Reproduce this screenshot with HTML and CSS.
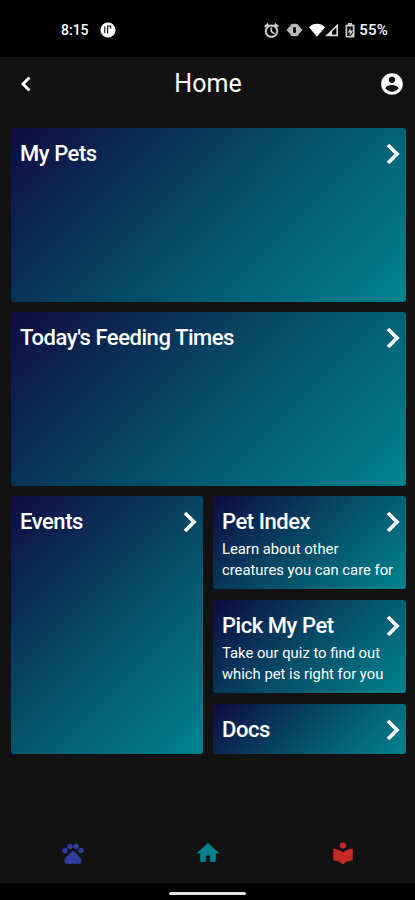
FILE: index.html
```html
<!DOCTYPE html>
<html lang="en">
<head>
    <meta charset="UTF-8">
    <meta name="viewport" content="width=device-width, initial-scale=1.0">
    <title>Home</title>
    <link rel="stylesheet" href="styles.css">
</head>
<body>
    <svg class="defs" width="0" height="0">
        <symbol id="chevron" viewBox="0 0 14 22">
            <path d="M2 2l9 9-9 9" fill="none" stroke="#fff" stroke-width="3.7"/>
        </symbol>
    </svg>

    <div class="statusbar">
        <div class="status-left">
            <span class="time">8:15</span>
            <svg class="app-icon" viewBox="0 0 16 16">
                <circle cx="8" cy="8" r="7.6" fill="#fff"/>
                <path d="M4.800 4.500V11M7.600 11.500V4.200h3v2.600" fill="none" stroke="#222" stroke-width="1.300"/>
            </svg>
        </div>
        <div class="status-right">
            <svg class="alarm" viewBox="0 0 24 24" width="17" height="17">
                <path fill="#ddd" stroke="#ddd" stroke-width=".7" d="M22 5.72l-4.6-3.86-1.29 1.53 4.6 3.86L22 5.72zM7.88 3.39L6.6 1.86 2 5.71l1.29 1.53 4.59-3.85zM12.5 8H11v6l4.75 2.85.75-1.23-4-2.37V8zM12 4c-4.97 0-9 4.03-9 9s4.02 9 9 9c4.97 0 9-4.03 9-9s-4.03-9-9-9zm0 16c-3.87 0-7-3.13-7-7s3.13-7 7-7 7 3.13 7 7-3.13 7-7 7z"/>
            </svg>
            <svg class="vibrate" viewBox="0 0 17 14" width="17" height="14">
                <path fill="#bbb" d="M0.500 7L4 3v8zM16.500 7L13 3v8z"/>
                <rect x="5" y="1.800" width="7" height="10.400" rx="2.500" fill="#bbb" stroke="#bbb" stroke-width="2"/>
                <rect x="7" y="4" width="3" height="6" rx="1" fill="#111"/>
            </svg>
            <svg class="wifi" viewBox="0 0 16 14" width="16" height="14">
                <path fill="#fff" d="M0 4.200C4.600-.4 11.400-.4 16 4.200L8 13.800z"/>
            </svg>
            <svg class="signal" viewBox="0 0 14 14" width="14" height="14">
                <path fill="none" stroke="#ddd" stroke-width="1.600" d="M12.200 2.400v10H2.200z"/>
                <path fill="#ddd" d="M1 13l6-6v6z"/>
            </svg>
            <svg class="battery" viewBox="0 0 10 15" width="10" height="15">
                <path fill="#ccc" d="M3 0h4v1.500h1.500Q9.500 1.500 9.500 2.500v11q0 1-1 1h-7q-1 0-1-1v-11q0-1 1-1H3z"/>
                <path fill="#111" d="M2.200 3.500h5.600v4H5.500V5L2.800 9.500h2v3.500L7.800 8v-.5h.1v2.600L5.800 13H2.200z"/>
            </svg>
            <span class="percent">55%</span>
        </div>
    </div>

    <header class="header">
        <svg class="back" viewBox="0 0 12 18">
            <path d="M9.500 2.500L3 9l6.500 6.500" fill="none" stroke="#fff" stroke-width="2.900"/>
        </svg>
        <h1>Home</h1>
        <svg class="account" viewBox="0 0 24 24">
            <path fill="#fff" d="M12 2C6.480 2 2 6.480 2 12s4.480 10 10 10 10-4.480 10-10S17.520 2 12 2zm0 3c1.660 0 3 1.340 3 3s-1.340 3-3 3-3-1.340-3-3 1.340-3 3-3zm0 14.200c-2.500 0-4.710-1.280-6-3.220.03-1.990 4-3.080 6-3.080 1.990 0 5.970 1.090 6 3.080-1.290 1.940-3.500 3.220-6 3.220z"/>
        </svg>
    </header>

    <main class="grid">
        <section class="card wide">
            <h2>My Pets</h2>
            <svg class="chevron"><use href="#chevron"/></svg>
        </section>
        <section class="card wide">
            <h2>Today's Feeding Times</h2>
            <svg class="chevron"><use href="#chevron"/></svg>
        </section>
        <section class="card events">
            <h2>Events</h2>
            <svg class="chevron"><use href="#chevron"/></svg>
        </section>
        <div class="column">
            <section class="card info">
                <h2>Pet Index</h2>
                <svg class="chevron"><use href="#chevron"/></svg>
                <p>Learn about other<br>creatures you can care for</p>
            </section>
            <section class="card info">
                <h2>Pick My Pet</h2>
                <svg class="chevron"><use href="#chevron"/></svg>
                <p>Take our quiz to find out<br>which pet is right for you</p>
            </section>
            <section class="card docs">
                <h2>Docs</h2>
                <svg class="chevron"><use href="#chevron"/></svg>
            </section>
        </div>
    </main>

    <nav class="tabs">
        <svg viewBox="0 0 26 26">
            <g fill="#303f9f">
                <circle cx="5" cy="10.500" r="2.700"/>
                <circle cx="10" cy="6.500" r="2.700"/>
                <circle cx="16" cy="6.500" r="2.700"/>
                <circle cx="21" cy="10.500" r="2.700"/>
                <path d="M13 11q1 0 2.200 1.300l5.400 5.700c1.900 2.400.8 5.800-1.600 5.800H7c-2.400 0-3.500-3.400-1.600-5.800l5.400-5.700Q12 11 13 11z"/>
            </g>
        </svg>
        <svg viewBox="0 0 24 24">
            <path fill="#00838f" stroke="#00838f" stroke-width=".5" stroke-linejoin="round" d="M10 20v-6h4v6h5v-8h3L12 3 2 12h3v8z"/>
        </svg>
        <svg viewBox="0 0 24 24">
            <path fill="#c62828" d="M12 11.550C9.640 9.350 6.480 8 3 8v11c3.480 0 6.640 1.350 9 3.550 2.360-2.190 5.520-3.550 9-3.550V8c-3.480 0-6.640 1.350-9 3.550zM12 8c1.660 0 3-1.340 3-3s-1.340-3-3-3-3 1.340-3 3 1.340 3 3 3z"/>
        </svg>
    </nav>
    <div class="gesture"><span class="handle"></span></div>
</body>
</html>
```
FILE: styles.css
```css
* {
    box-sizing: border-box;
}
body {
    margin: 0;
    height: 900px;
    display: flex;
    flex-direction: column;
    background-color: #121212;
    color: #fff;
    font-family: Roboto, sans-serif;
    overflow: hidden;
}
h1, h2, p {
    margin: 0;
    font-weight: 500;
}
svg {
    display: block;
    flex: none;
}
.defs {
    display: none;
}
.statusbar {
    height: 57px;
    padding: 3px 27px 0 61px;
    display: flex;
    justify-content: space-between;
    align-items: center;
    background-color: #000;
    font-size: 14px;
    font-weight: 500;
}
.status-left, .status-right {
    display: flex;
    align-items: center;
}
.app-icon {
    width: 16px;
    height: 16px;
    margin-left: 11px;
}
.percent {
    font-size: 15px;
    letter-spacing: 0.2px;
}
.alarm {
    margin-right: -1px;
}
.vibrate {
    margin-left: 7px;
}
.wifi {
    margin-left: 6px;
}
.battery {
    margin: 0 4px 0 6px;
}
.header {
    height: 71px;
    padding: 0 10px 18px 20px;
    display: grid;
    grid-template-columns: 26px 1fr 26px;
    align-items: center;
}
.header h1 {
    padding-right: 9px;
    font-size: 25px;
    font-weight: 400;
    text-align: center;
}
.back {
    width: 12px;
    height: 18px;
}
.account {
    width: 26px;
    height: 26px;
}
.grid {
    padding: 0 9px 0 11px;
    display: grid;
    grid-template-columns: 192px 193px;
    grid-template-rows: 174px 174px 258px;
    gap: 10px;
}
.card {
    display: flex;
    flex-wrap: wrap;
    justify-content: space-between;
    align-content: flex-start;
    padding: 12px 6px 0 9px;
    border-radius: 3px;
    background: linear-gradient(135deg, #100b42, #064a65 48%, #00838f);
}
.card h2 {
    font-size: 22px;
    line-height: 28px;
    letter-spacing: -0.45px;
}
.card p {
    width: 100%;
    margin-top: 3px;
    font-size: 14.8px;
    line-height: 21px;
    font-weight: 400;
    white-space: nowrap;
}
.chevron {
    width: 14px;
    height: 22px;
    margin-top: 3px;
}
.wide {
    grid-column: span 2;
}
.column {
    display: flex;
    flex-direction: column;
    gap: 11px;
}
.info {
    height: 93px;
}
.docs {
    height: 50px;
}
.tabs {
    margin-top: auto;
    height: 60px;
    padding: 0 5px;
    display: flex;
    justify-content: space-around;
    align-items: center;
}
.tabs svg {
    width: 26px;
    height: 26px;
}
.gesture {
    height: 17px;
    display: flex;
    justify-content: center;
    align-items: center;
    background-color: #000;
}
.handle {
    width: 77px;
    height: 3px;
    margin-top: 3px;
    border-radius: 2px;
    background-color: #e4e0e4;
}
```
